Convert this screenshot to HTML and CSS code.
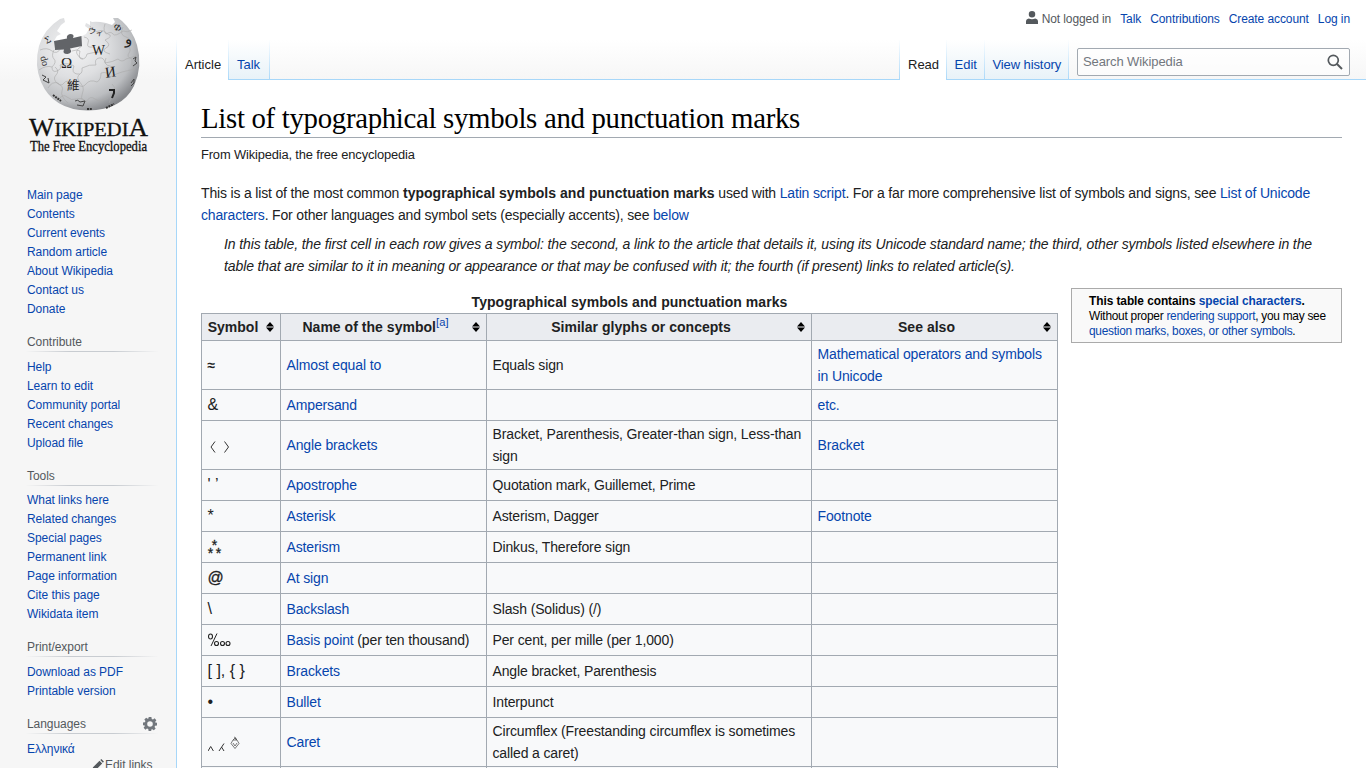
FILE: index.html
```html
<!DOCTYPE html>
<html lang="en">
<head>
<meta charset="utf-8">
<title>List of typographical symbols and punctuation marks - Wikipedia</title>
<link rel="stylesheet" href="styles.css">
</head>
<body>
<svg class="defs" width="0" height="0"><symbol id="sort" viewBox="0 0 8 10"><path d="M0 4.500 4 0 8 4.500ZM0 5.500h8L4 10Z"/></symbol></svg>
<div class="page">
<aside class="sidebar">
  <a class="logo">
  <svg width="136" height="156" viewBox="20 4 136 156">
    <defs><radialGradient id="globe" cx="36%" cy="32%" r="72%"><stop offset="0" stop-color="#f4f4f5"/><stop offset=".45" stop-color="#dedfe1"/><stop offset=".8" stop-color="#bbbdc0"/><stop offset="1" stop-color="#85878b"/></radialGradient></defs>
    <path fill="url(#globe)" d="M64 18 60 19Q44 29 39 46Q34 65 41 82Q53 110 88 110.500Q122 110 134 86Q143 66 137 45Q133 31 122 21L118 18 113 18 115 22 112 25 106 23Q97 21 92 22L90 21 90 25 86 23 85 26 89 29 86 34 82 36 82 46 54 49 54 41 57 36 61 34 57 31 61 25 65 22Z"/>
    <g fill="none" stroke="#aaa" stroke-width=".6"><path d="M40 50q7-3 12 1t9-3M72 51q5-2 8 0-2 8 2 8t5-5q8-2 12-2M39 70q7-5 13-3 0 6 5 4t3-6q8-3 14 1-3 7 3 8t5-6q8-4 14-3-2-6 3-7t6 5q8-1 13-4 4 4 8 0l10-3M48 88q4-7 10-5 3 4 6 0t8 1M78 84q4 5 8 0t11-2q4-2 4-9 7-2 9 4 8-4 12-5t13-3M57 101q6-8 10-4t10 2 9 3q4-7 9-3t13-1"/><path d="M54 50q-3 6 0 9t-2 8M55 67q5 4 1 8t2 9q6 2 4 7t6 12M82 46q-7 4-5 8t6 5M80 74q-4 3-1 7t4 6-1 8 4 6M105 24q-3 8 3 10t-3 6q7 5 1 8t4 6M106 58q-3 7 4 8t-1 8M112 84q4 3 2 7t-5 12M123 27q-4 8 3 10t1 8q5 4 2 8t3 6q-1 7 2 10M90 26q4 7 9 5t7 3q5-3 7 0t10-3q4 2 9-1M84 37q6 1 4 6t5 4"/></g>
    <path fill="#626468" d="M54 41 67 38.500Q66 35 70 34Q75 34 73 38L81.500 36 82 46 70 48.500Q73 53 67.500 54Q62 54 64 49.500L55 50Z"/>
    <g class="globe-text"><text x="61" y="68" font-size="15">Ω</text><text x="92" y="55" font-size="14" textLength="13" lengthAdjust="spacingAndGlyphs">W</text><text x="105" y="77" font-size="15" transform="rotate(-8 110 72)">И</text><text class="cjk" x="67" y="90" font-size="12.500">維</text><text x="88" y="34" font-size="8" class="cjk" transform="rotate(12 92 31)">ウィ</text><text x="114" y="31" font-size="10" transform="rotate(35 118 27)">Ф</text><text x="125" y="44" font-size="15">و</text><path fill="none" stroke="#222" stroke-width="2" d="M109 90h5v3l-2 5"/><text x="45" y="43" font-size="10" transform="rotate(-25 48 40)">Σ</text><text x="41" y="62" font-size="10" transform="rotate(75 44 59)">do</text><g fill="none" stroke="#444"><path d="m42 75 4 2-3 3 6 3-1-5M133 59l3-2-1 4 2 2-4 3M131 83l3-4v4l-3 3M75 101q3-2 5 1l5-1-2 5-6-1"/></g></g>
    <g stroke="#333" stroke-width="2" fill="none" stroke-dasharray="2 .8"><path d="m53 95 8 6M106 108l8-4M87 109h5"/></g>
    <g class="wordmark"><text x="29" y="136" font-size="25" textLength="119" lengthAdjust="spacingAndGlyphs">W<tspan font-size="19">IKIPEDI</tspan>A</text><text x="30" y="150.500" font-size="14" textLength="117" lengthAdjust="spacingAndGlyphs">The Free Encyclopedia</text></g>
  </svg></a>
  <nav><section><ul><li><a>Main page</a></li><li><a>Contents</a></li><li><a>Current events</a></li><li><a>Random article</a></li><li><a>About Wikipedia</a></li><li><a>Contact us</a></li><li><a>Donate</a></li></ul></section>
  <section><h3>Contribute</h3><ul><li><a>Help</a></li><li><a>Learn to edit</a></li><li><a>Community portal</a></li><li><a>Recent changes</a></li><li><a>Upload file</a></li></ul></section>
  <section class="tools"><h3>Tools</h3><ul><li><a>What links here</a></li><li><a>Related changes</a></li><li><a>Special pages</a></li><li><a>Permanent link</a></li><li><a>Page information</a></li><li><a>Cite this page</a></li><li><a>Wikidata item</a></li></ul></section>
  <section><h3>Print/export</h3><ul><li><a>Download as PDF</a></li><li><a>Printable version</a></li></ul></section>
  <section><h3 class="languages"><span>Languages</span><svg width="14" height="14" viewBox="0 0 20 20"><path fill="#72777d" fill-rule="evenodd" d="M8 0h4l.5 2.700 1.800.8 2.200-1.600 2.600 2.600-1.600 2.200.8 1.800L20 8v4l-2.700.5-.8 1.800 1.600 2.200-2.600 2.600-2.200-1.600-1.800.8L12 20H8l-.5-2.700-1.800-.8-2.200 1.600-2.600-2.600 1.600-2.200-.8-1.800L0 12V8l2.700-.5.8-1.800L1.900 3.500 4.500.9l2.200 1.600 1.300-.8ZM10 6a4 4 0 1 0 0 8 4 4 0 0 0 0-8Z"/></svg></h3><ul><li><a>Ελληνικά</a></li></ul>
  <div class="edit-links"><svg width="12" height="12" viewBox="0 0 12 12"><path fill="#54595d" d="M0 12 1 8.200 7.500 1.800 10.200 4.500 3.800 11ZM8.300 1 9.300 0l2.600 2.600-1 1.100Z"/></svg><span>Edit links</span></div></section></nav>
</aside>
<div class="main">
  <header class="head">
    <div class="personal"><span class="user"><svg width="12" height="13" viewBox="0 0 12 13"><path fill="#54595d" d="M6 0a3.200 3.200 0 1 1 0 6.500A3.200 3.200 0 0 1 6 0ZM0 13v-2.500Q0 8 2.800 7.500q3.200 1.400 6.400 0Q12 8 12 10.500V13Z"/></svg>Not logged in</span><a>Talk</a><a>Contributions</a><a>Create account</a><a>Log in</a></div>
    <div class="nav-row">
      <div class="tab article on">Article</div><div class="tab talk"><a>Talk</a></div><div class="spacer"></div>
      <div class="tab read on">Read</div><div class="tab edit"><a>Edit</a></div><div class="tab history"><a>View history</a></div>
      <div class="search-area"><div class="search"><span>Search Wikipedia</span><svg width="16" height="16" viewBox="0 0 16 16" fill="none" stroke="#54595d"><circle cx="6.300" cy="6.300" r="5" stroke-width="1.700"/><path stroke-width="2" d="m10 10 5 5"/></svg></div></div>
    </div>
  </header>
  <main class="content">
    <h1>List of typographical symbols and punctuation marks</h1>
    <div class="sitesub">From Wikipedia, the free encyclopedia</div>
    <p>This is a list of the most common <b>typographical symbols and punctuation marks</b> used with <a>Latin script</a>. For a far more comprehensive list of symbols and signs, see <a>List of Unicode<br>characters</a>. For other languages and symbol sets (especially accents), see <a>below</a></p>
    <p class="note">In this table, the first cell in each row gives a symbol: the second, a link to the article that details it, using its Unicode standard name; the third, other symbols listed elsewhere in the<br>table that are similar to it in meaning or appearance or that may be confused with it; the fourth (if present) links to related article(s).</p>
    <div class="columns">
    <table>
      <caption>Typographical symbols and punctuation marks</caption>
      <colgroup><col class="c1"><col class="c2"><col class="c3"><col class="c4"></colgroup>
      <tr class="labels"><th><div><span>Symbol</span><svg><use href="#sort"/></svg></div></th><th><div><span>Name of the symbol<sup><a>[a]</a></sup></span><svg><use href="#sort"/></svg></div></th><th><div><span>Similar glyphs or concepts</span><svg><use href="#sort"/></svg></div></th><th><div><span>See also</span><svg><use href="#sort"/></svg></div></th></tr>
      <tr class="tall"><td class="s"><span class="approx">≈</span></td><td><a>Almost equal to</a></td><td>Equals sign</td><td><a>Mathematical operators and symbols<br>in Unicode</a></td></tr>
      <tr><td class="s">&amp;</td><td><a>Ampersand</a></td><td></td><td><a>etc.</a></td></tr>
      <tr class="tall"><td class="s"><svg width="24" height="14" viewBox="0 0 24 14" fill="none" stroke="#333" stroke-width="1"><path d="M7 1.500 3 7l4 5.500M16.500 1.500l4 5.500-4 5.500"/></svg></td><td><a>Angle brackets</a></td><td>Bracket, Parenthesis, Greater-than sign, Less-than<br>sign</td><td><a>Bracket</a></td></tr>
      <tr><td class="s">' ’</td><td><a>Apostrophe</a></td><td>Quotation mark, Guillemet, Prime</td><td></td></tr>
      <tr><td class="s">*</td><td><a>Asterisk</a></td><td>Asterism, Dagger</td><td><a>Footnote</a></td></tr>
      <tr><td class="s"><span class="asterism"><span>*</span><span>*</span><span>*</span></span></td><td><a>Asterism</a></td><td>Dinkus, Therefore sign</td><td></td></tr>
      <tr><td class="s"><span class="at">@</span></td><td><a>At sign</a></td><td></td><td></td></tr>
      <tr><td class="s">\</td><td><a>Backslash</a></td><td>Slash (Solidus) (/)</td><td></td></tr>
      <tr><td class="s"><svg class="basis" width="24" height="14" viewBox="0 0 24 14" fill="none" stroke="#222" stroke-width="1.100"><ellipse cx="2.500" cy="3.500" rx="2" ry="2.500"/><path stroke-width="1" d="M9 .5 3 13"/><circle cx="8.500" cy="10.500" r="2"/><circle cx="14.500" cy="10.500" r="2"/><circle cx="20" cy="10.500" r="2"/></svg></td><td><a>Basis point</a> (per ten thousand)</td><td>Per cent, per mille (per 1,000)</td><td></td></tr>
      <tr><td class="s">[ ], { }</td><td><a>Brackets</a></td><td>Angle bracket, Parenthesis</td><td></td></tr>
      <tr><td class="s">•</td><td><a>Bullet</a></td><td>Interpunct</td><td></td></tr>
      <tr class="tall"><td class="s"><svg width="34" height="18" viewBox="0 0 34 18" fill="none" stroke="#333" stroke-width="1"><path d="m0 16 2.700-4.500L5.400 16M11 16l5-7.500M13.500 12l2.500 4"/><path stroke-width=".65" d="m23 8.500 4 5 4-5-2-3.500h-4ZM25 8l2 3 2-3M25 5l2-2 2 2M26 2l2 1v2"/></svg></td><td><a>Caret</a></td><td>Circumflex (Freestanding circumflex is sometimes<br>called a caret)</td><td></td></tr>
      <tr><td></td><td></td><td></td><td></td></tr>
    </table>
    <aside class="special"><b>This table contains <a>special characters</a>.</b><br>Without proper <a>rendering support</a>, you may see<br><a>question marks, boxes, or other symbols</a>.</aside>
    </div>
  </main>
</div>
</div>
</body>
</html>
```
FILE: styles.css
```css
* { box-sizing: border-box; }
body { margin: 0; height: 768px; overflow: hidden; background: #f6f6f6; color: #202122; font-family: "Liberation Sans", Arial, sans-serif; }
a { color: #0645ad; text-decoration: none; }
.defs { position: absolute; }
.page { display: flex; height: 768px; overflow: hidden; background: linear-gradient(#fff 40px, #f6f6f6 80px, #f6f6f6); }
.sidebar { width: 176px; flex: none; }
.logo { display: block; padding: 4px 0 0 20px; height: 186px; }
.logo svg { display: block; }
.globe-text { font-family: "Liberation Serif", serif; fill: #222; }
.cjk { font-family: "Noto Sans CJK TC", sans-serif; }
.wordmark { font-family: "Liberation Serif", serif; fill: #111; stroke: #111; stroke-width: .3px; }
.sidebar nav { padding-left: 27px; font-size: 12px; letter-spacing: -.05px; }
.sidebar section { margin-bottom: 14px; }
.sidebar ul { list-style: none; margin: 0; padding: 0; }
.sidebar li { height: 19px; line-height: 19px; }
.sidebar h3 { margin: 0 18px 6px -1px; padding-left: 1px; height: 19px; line-height: 19px; font-size: 12px; font-weight: normal; color: #54595d; border-bottom: 1px solid; border-image: linear-gradient(to right, #f6f6f6, #c8ccd1 33%, #c8ccd1 66%, #f6f6f6) 1; }
.sidebar .tools h3 { margin-bottom: 5px; }
.sidebar .languages { display: flex; justify-content: space-between; align-items: center; padding-right: 1px; }
.edit-links { display: flex; align-items: center; gap: 1px; margin: -4px 0 0 65px; height: 19px; color: #54595d; }
.main { width: 1190px; display: flex; flex-direction: column; }
.head { height: 80px; flex: none; }
.personal { display: flex; justify-content: flex-end; gap: 9px; height: 40px; padding: 11px 16px 0 0; font-size: 12px; line-height: 16px; letter-spacing: -.09px; }
.user { display: flex; gap: 4px; color: #54595d; }
.nav-row { display: flex; height: 40px; }
.tab { flex: none; font-size: 13px; line-height: 16px; padding: 17px 0 0 8px; border-left: 1px solid; border-image: linear-gradient(#fff, #a7d7f9) 1; background: linear-gradient(#fff, #e8f2f8) 0 0 / 100% 39px no-repeat, #a7d7f9; }
.tab.on { background: #fff; }
.article { width: 52px; }
.talk { width: 42px; border-right: 1px solid; }
.read { width: 47px; }
.edit { width: 38px; padding-left: 7.500px; }
.history { width: 85px; border-right: 1px solid; padding-left: 7.500px; letter-spacing: -.1px; }
.spacer { flex: 1; border-bottom: 1px solid #a7d7f9; }
.search-area { width: 297px; flex: none; padding: 8px 16px 0 8px; border-bottom: 1px solid #a7d7f9; }
.search { display: flex; justify-content: space-between; height: 28px; padding: 5px 6px 0 5px; border: 1px solid #a2a9b1; border-radius: 2px; background: rgba(255,255,255,.5); color: #72777d; font-size: 13px; line-height: 16px; letter-spacing: -.1px; }
.content { flex: 1; min-height: 0; overflow: hidden; padding: 20px 24px 0; background: #fff; border-left: 1px solid #a7d7f9; font-size: 14px; line-height: 22px; letter-spacing: -.17px; }
b, th, caption { letter-spacing: .03px; }
h1 { margin: 0; height: 38px; border-bottom: 1px solid #a2a9b1; color: #000; font: 28.800px/37px "Liberation Serif", serif; letter-spacing: -.3px; white-space: nowrap; }
.sitesub { font-size: 12.880px; line-height: 20px; margin-top: 7px; height: 37px; letter-spacing: -.14px; }
p { margin: 0; white-space: nowrap; }
.note { margin: 7px 0 0 23px; font-style: italic; letter-spacing: -.11px; }
.columns { display: flex; justify-content: space-between; align-items: flex-start; padding-top: 11px; }
table { width: 857px; table-layout: fixed; border-collapse: collapse; background: #f8f9fa; margin-top: 3px; letter-spacing: -.13px; }
caption { font-weight: bold; height: 22px; line-height: 22px; letter-spacing: .06px; }
.c1 { width: 79px; } .c2 { width: 206px; } .c3 { width: 325px; } .c4 { width: 246px; }
tr { height: 31px; }
tr.labels { height: 27px; }
tr.tall { height: 49px; }
td, th { padding: 0 5px 0 5.500px; border: 1px solid #a2a9b1; white-space: nowrap; }
th { background: #eaecf0; padding: 0 6px 0 5px; }
th div { display: flex; align-items: center; justify-content: space-between; }
th div > span { flex: 1; padding-right: 7px; }
th svg { width: 8px; height: 10px; flex: none; }
sup { font-size: 11.200px; line-height: 1; font-weight: normal; vertical-align: 6px; }
.s { font-size: 16px; letter-spacing: 0; }
.s svg { display: block; margin-top: 3px; }
.s .basis { margin-top: 0; }
.approx { font-size: 14px; font-weight: bold; }
.at { -webkit-text-stroke: .3px #202122; }
.asterism { display: grid; grid-template-columns: 8px 8px; width: 16px; height: 17px; margin-left: -1px; font-size: 14px; line-height: 12px; grid-auto-rows: 8px; text-align: center; -webkit-text-stroke: .3px #202122; }
.asterism span:first-child { grid-column: 1 / 3; }
.special { width: 271px; height: 55px; border: 1px solid #aaa; background: #f9f9f9; color: #000; padding: 5px 0 0 17px; font-size: 11.900px; line-height: 15px; letter-spacing: -.26px; white-space: nowrap; }
.special b { letter-spacing: -.06px; }
```
